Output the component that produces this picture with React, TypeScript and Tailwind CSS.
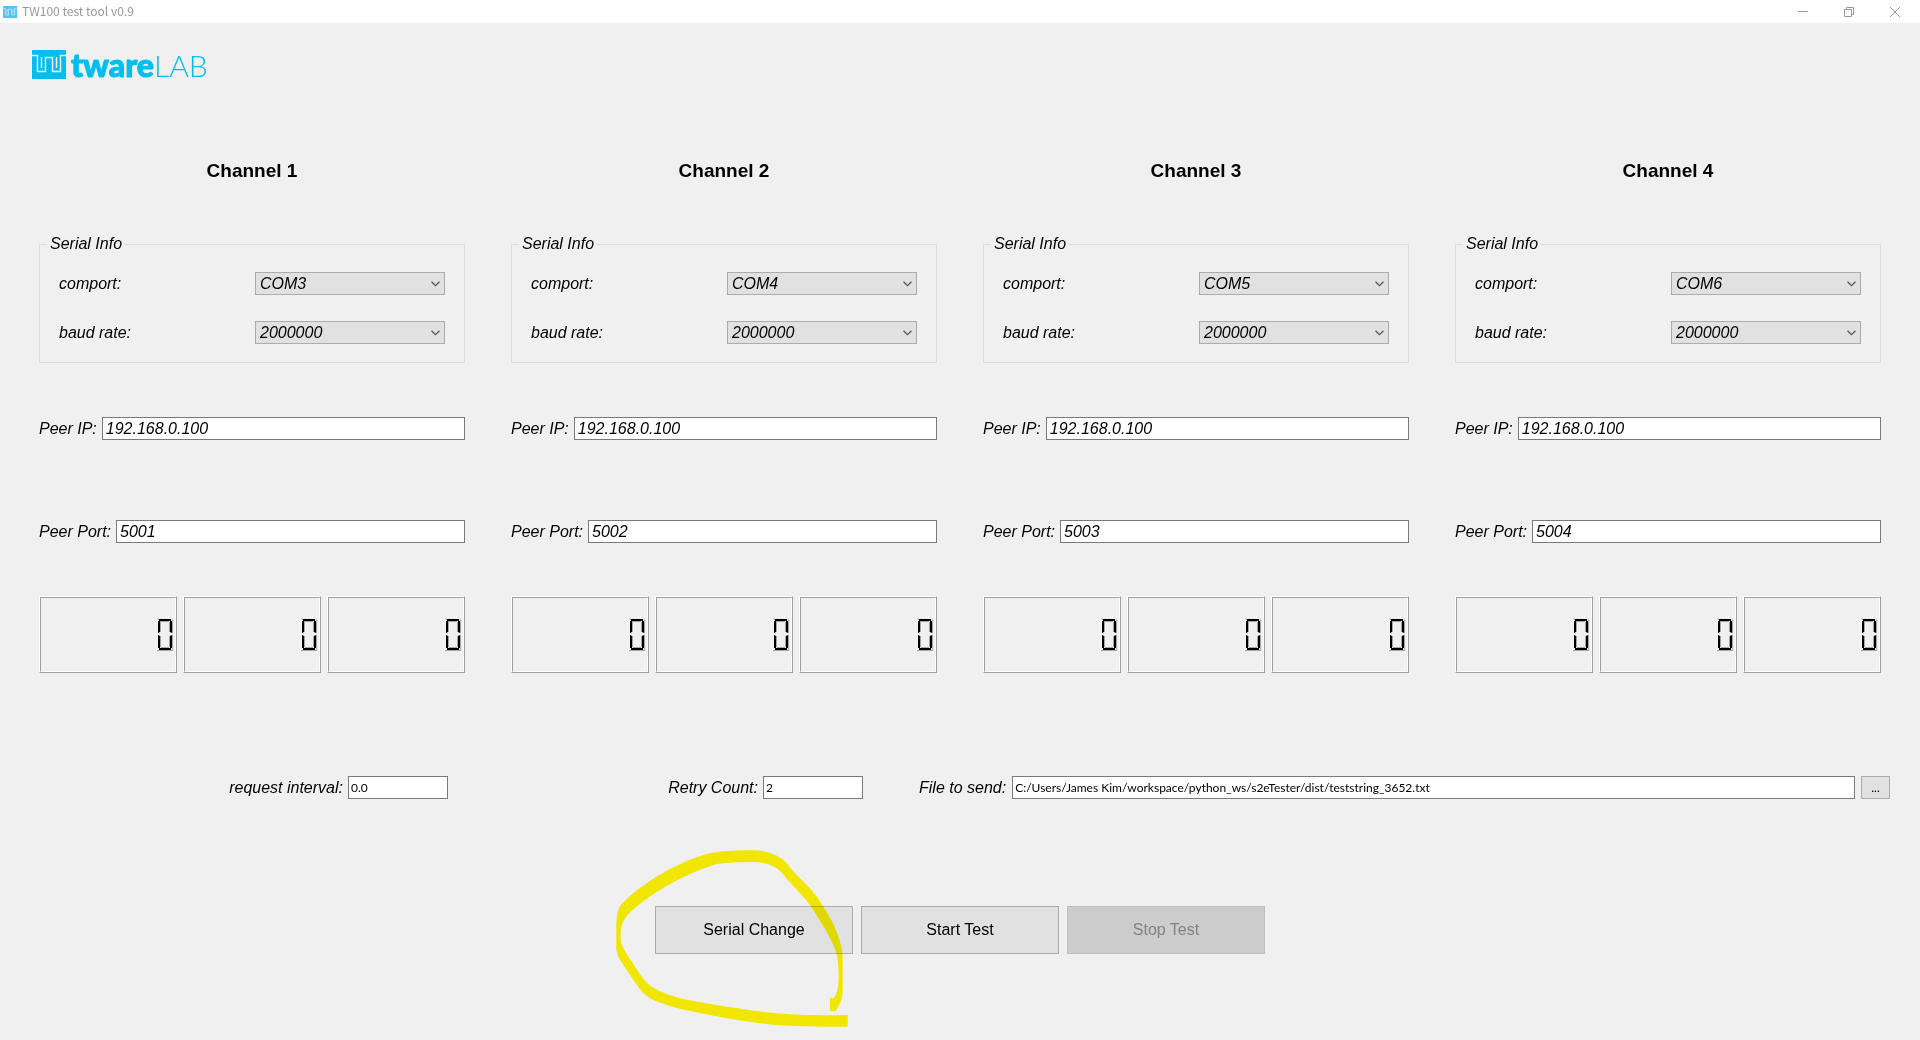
import { useState, type ReactNode } from 'react'

interface Channel {
  id: number
  comport: string
  baudRate: string
  peerIp: string
  peerPort: string
}

const CHANNELS: Channel[] = [
  { id: 1, comport: 'COM3', baudRate: '2000000', peerIp: '192.168.0.100', peerPort: '5001' },
  { id: 2, comport: 'COM4', baudRate: '2000000', peerIp: '192.168.0.100', peerPort: '5002' },
  { id: 3, comport: 'COM5', baudRate: '2000000', peerIp: '192.168.0.100', peerPort: '5003' },
  { id: 4, comport: 'COM6', baudRate: '2000000', peerIp: '192.168.0.100', peerPort: '5004' },
]

const COMPORTS = ['COM3', 'COM4', 'COM5', 'COM6']
const BAUD_RATES = ['9600', '115200', '921600', '2000000']

function LogoMark({ className }: { className: string }) {
  return (
    <svg className={className} viewBox="0 0 34 29" preserveAspectRatio="none" fill="none">
      <path d="M0 0H34V29H0Z" fill="currentColor" />
      <path
        d="M0 5.5H5.5V21.5H13.5V7.5H20.5V21.5H28.5V5.5H34M9.5 7V18M24.5 7V18"
        stroke="#f4f4f4"
        strokeWidth="1.4"
      />
    </svg>
  )
}

function TitleBar() {
  return (
    <header className="flex h-[23px] items-center bg-white pl-[3px] pr-[2px] text-[#999999]">
      <LogoMark className="h-3 w-[14px] text-[#4fc3f7]" />
      <h1 className="ml-[5px] flex-1 pb-[2px] font-['Noto_Sans_CJK_KR',sans-serif] text-xs leading-4">TW100 test tool v0.9</h1>
      <button aria-label="Minimize" className="flex h-full w-[46px] items-center justify-center">
        <svg className="h-[10px] w-[10px]" viewBox="0 0 10 10" stroke="currentColor">
          <path d="M0 4.5H10" />
        </svg>
      </button>
      <button aria-label="Restore" className="flex h-full w-[46px] items-center justify-center">
        <svg className="h-[10px] w-[10px]" viewBox="0 0 10 10" fill="none" stroke="currentColor">
          <path d="M.5 2.5H7.5V9.5H.5ZM2.5 2.5V.5H9.5V7.5H7.5" />
        </svg>
      </button>
      <button aria-label="Close" className="flex h-full w-[46px] items-center justify-center">
        <svg className="h-[10px] w-[10px]" viewBox="0 0 10 10" stroke="currentColor">
          <path d="M0 0L10 10M10 0L0 10" />
        </svg>
      </button>
    </header>
  )
}

function SelectRow({ id, label, options, defaultValue }: { id: string; label: string; options: string[]; defaultValue: string }) {
  return (
    <div className="flex items-center justify-between">
      <label htmlFor={id}>{label}</label>
      <div className="relative w-[190px]">
        <select
          id={id}
          defaultValue={defaultValue}
          className="block h-[23px] w-full appearance-none border border-[#adadad] bg-[#e1e1e1] pl-1 italic leading-5"
        >
          {options.map((o) => (
            <option key={o}>{o}</option>
          ))}
        </select>
        <svg
          className="pointer-events-none absolute right-[5px] top-[9px] h-[6px] w-[9px]"
          viewBox="0 0 9 6"
          fill="none"
          stroke="#555555"
          strokeWidth="1.2"
        >
          <path d="M.5 .8L4.5 4.6L8.5 .8" />
        </svg>
      </div>
    </div>
  )
}

function PeerField({ id, label, defaultValue }: { id: string; label: string; defaultValue: string }) {
  return (
    <div className="flex items-center gap-[5px]">
      <label htmlFor={id}>{label}</label>
      <input
        id={id}
        defaultValue={defaultValue}
        className="h-[23px] min-w-0 flex-1 border border-[#7a7a7a] bg-white px-[3px] italic leading-5"
      />
    </div>
  )
}

// Seven segment zero in a raised frame
function LcdNumber({ label }: { label: string }) {
  return (
    <div className="h-[77px] flex-1 border border-b-[#a0a0a0] border-l-white border-r-[#a0a0a0] border-t-white">
      <div className="flex h-full items-center justify-end border border-b-white border-l-[#a0a0a0] border-r-white border-t-[#a0a0a0] pb-[2px] pr-[2px]">
        <svg role="img" aria-label={label} className="h-[34px] w-4" viewBox="0 0 16 34">
          <path
            d="M0 .5L2 3M3.5 4V15M15.5 2V16M12.5 5V15M4 4.5H12M3.5 19V30M12.5 19V30M15.5 18V33M4 30.5H12M0 33.5H16"
            fill="none"
            stroke="#a6a6a6"
          />
          <path
            d="M2 2H14V4H2ZM1 4H3V15L1 16ZM13 4H15V16L13 15ZM1 18L3 19V31H1ZM13 19L15 18V31H13ZM2 31H14V33H2Z"
            fill="#000000"
          />
        </svg>
      </div>
    </div>
  )
}

function ChannelPanel({ channel }: { channel: Channel }) {
  const { id, comport, baudRate, peerIp, peerPort } = channel
  return (
    <section className="italic">
      <h2 className="text-center text-[19px] font-bold not-italic leading-6">Channel {id}</h2>
      <fieldset className="mt-[51px] border border-[#dcdcdc] pb-[18px] pl-[19px] pr-[19px]">
        <legend className="-ml-3 px-[3px] leading-5">Serial Info</legend>
        <div className="flex flex-col gap-[26px] pt-[18px]">
          <SelectRow id={`comport-${id}`} label="comport:" options={COMPORTS} defaultValue={comport} />
          <SelectRow id={`baud-${id}`} label="baud rate:" options={BAUD_RATES} defaultValue={baudRate} />
        </div>
      </fieldset>
      <div className="mt-[54px] flex flex-col gap-20">
        <PeerField id={`ip-${id}`} label="Peer IP:" defaultValue={peerIp} />
        <PeerField id={`port-${id}`} label="Peer Port:" defaultValue={peerPort} />
      </div>
      <div className="mt-[53px] flex gap-[6px]">
        <LcdNumber label="0" />
        <LcdNumber label="0" />
        <LcdNumber label="0" />
      </div>
    </section>
  )
}

function SmallField({ id, label, defaultValue, className }: { id: string; label: string; defaultValue: string; className: string }) {
  return (
    <>
      <label htmlFor={id} className="whitespace-nowrap italic">
        {label}
      </label>
      <input
        id={id}
        defaultValue={defaultValue}
        className={`h-[23px] border border-[#7a7a7a] bg-white px-[2px] font-['Lato',sans-serif] text-xs leading-5 ${className}`}
      />
    </>
  )
}

function ActionButton({ children, disabled, onClick }: { children: ReactNode; disabled?: boolean; onClick?: () => void }) {
  return (
    <button
      disabled={disabled}
      onClick={onClick}
      className="h-12 w-[198px] border border-[#adadad] bg-[#e1e1e1] disabled:border-[#bfbfbf] disabled:bg-[#cccccc] disabled:text-[#838383]"
    >
      {children}
    </button>
  )
}

function MarkerCircle() {
  return (
    <svg
      className="pointer-events-none absolute -left-[45px] -top-[67px] h-[200px] w-[250px] mix-blend-multiply"
      viewBox="0 0 750 600"
      fill="#fff500"
    >
      <path d="M320 39C240 50 110 120 40 190C22 208 20 230 19 260V330C22 355 30 362 45 385C65 415 80 440 100 462C120 482 150 492 190 504C260 522 360 540 440 551C500 560 560 563 713 563V528C600 530 540 528 470 520C400 512 300 496 240 484C200 476 150 460 125 443C105 430 90 405 70 375C50 345 35 325 32 300C30 270 35 245 60 220C120 165 220 105 320 75C350 70 400 69 440 69C480 72 500 85 515 100C535 128 570 160 600 198C630 245 660 290 675 330C688 365 688 420 683 450C680 462 677 470 672 477H660V516H677C690 495 697 480 698 460V350C694 310 680 275 665 245C645 210 625 175 600 148C575 122 550 100 530 72C510 50 480 37 440 34C400 33 350 35 320 39Z" />
    </svg>
  )
}

export default function App() {
  const [running, setRunning] = useState(false)

  return (
    <div className="min-h-screen bg-[#f0f0f0] font-['Liberation_Sans',Arial,sans-serif] text-base leading-5 text-black">
      <TitleBar />
      <div className="flex h-[83px] items-center pl-8 text-[#00bfef]">
        <LogoMark className="h-[29px] w-[34px]" />
        <div className="ml-[5px] flex items-baseline font-['Lato',sans-serif] text-[30px] leading-8">
          <span className="text-[32px] font-black [-webkit-text-stroke:1px_#00bfef]">tware</span>
          <span className="font-light">LAB</span>
        </div>
      </div>

      <main className="pt-[53px]">
        <div className="grid grid-cols-4 gap-[46px] px-[39px]">
          {CHANNELS.map((channel) => (
            <ChannelPanel key={channel.id} channel={channel} />
          ))}
        </div>

        <div className="mt-[103px] grid grid-cols-[418fr_415fr_1027fr] px-[30px]">
          <div className="flex items-center justify-end gap-[5px]">
            <SmallField id="interval" label="request interval:" defaultValue="0.0" className="w-[100px]" />
          </div>
          <div className="flex items-center justify-end gap-[5px]">
            <SmallField id="retry" label="Retry Count:" defaultValue="2" className="w-[100px]" />
          </div>
          <div className="flex items-center gap-[6px] pl-14">
            <SmallField
              id="file"
              label="File to send:"
              defaultValue="C:/Users/James Kim/workspace/python_ws/s2eTester/dist/teststring_3652.txt"
              className="min-w-0 flex-1"
            />
            <button className="h-[23px] w-[29px] border border-[#adadad] bg-[#e1e1e1] font-['Lato',sans-serif] text-xs leading-5">
              ...
            </button>
          </div>
        </div>

        <div className="mt-[107px] flex justify-center gap-2">
          <div className="relative">
            <ActionButton>Serial Change</ActionButton>
            <MarkerCircle />
          </div>
          <ActionButton onClick={() => setRunning(true)}>Start Test</ActionButton>
          <ActionButton disabled={!running} onClick={() => setRunning(false)}>
            Stop Test
          </ActionButton>
        </div>
      </main>
    </div>
  )
}
